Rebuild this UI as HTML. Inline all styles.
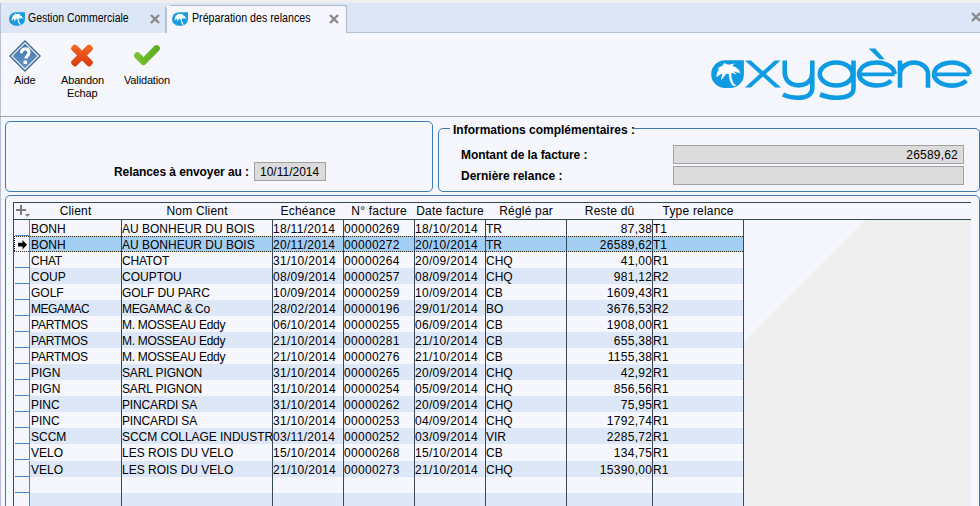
<!DOCTYPE html>
<html><head><meta charset="utf-8">
<style>
*{margin:0;padding:0;box-sizing:border-box}
html,body{width:980px;height:506px;overflow:hidden}
body{position:relative;background:#f5f6fe;font-family:"Liberation Sans",sans-serif;color:#000}
.a{position:absolute}
#topstrip{left:0;top:0;width:980px;height:3px;background:#efefef}
#tabbar{left:0;top:3px;width:980px;height:30px;background:#dde6f6}
#tabrest{left:346px;top:5px;width:634px;height:28px;border-left:1px solid #b4c0d4;border-bottom:1px solid #b4c0d4}
#leftedge{left:0;top:3px;width:1px;height:503px;background:#b9c1d2}
#tab2{left:165px;top:5px;width:182px;height:28px;background:#f5f6fe;border:1px solid #aebad0;border-left:2px solid #b6c0d3;border-bottom:none;border-radius:0 3px 0 0}
.tabt{font-size:12px;white-space:nowrap;transform-origin:0 0;transform:scaleX(0.872);line-height:14px}
.x{width:10px;height:10px}
.lbl{font-size:11px;white-space:nowrap;line-height:13px;letter-spacing:-0.15px}
.b{font-weight:bold;font-size:12px;white-space:nowrap;line-height:14px}
.sep{left:0;top:116px;width:980px;height:1px;background:#a3a3a3}
.panel{border:1px solid #3d7ab3;border-radius:5px}
.fld{background:#dcdcdc;border:1px solid #a2a2a2;font-size:12px;line-height:17px;white-space:nowrap}
.hd{font-size:12px;height:16px;line-height:16px;text-align:center;white-space:nowrap;overflow:hidden;letter-spacing:0.2px;text-indent:0.2px}
.cell{font-size:12px;height:16px;line-height:16px;white-space:nowrap;overflow:hidden;padding-left:0}
.cell.r{text-align:right;padding-left:0}
.n{letter-spacing:0.3px;padding-left:0}
.cell.r.n{margin-left:0.3px}
.dot{height:1px;background-image:linear-gradient(to right,#3a2a1a 50%,transparent 50%);background-size:2px 1px}
.vdot{width:1px;background-image:linear-gradient(to bottom,#000 50%,transparent 50%);background-size:1px 2px}
</style></head><body>
<div class="a" id="topstrip"></div>
<div class="a" id="tabbar"></div>
<div class="a" id="tabrest"></div>
<div class="a" id="tab2"></div>
<div class="a" id="leftedge"></div>
<div class="a" style="left:3px;top:5px;width:4px;height:1px;background:#f1eee4"></div>
<div class="a" style="left:3px;top:5px;width:1px;height:4px;background:#f1eee4"></div>
<div class="a" style="left:162px;top:5px;width:8px;height:1px;background:#f1eee4"></div>
<div class="a" style="left:166px;top:5px;width:1px;height:3px;background:#e8e6e0"></div>

<svg width="0" height="0" style="position:absolute">
 <defs>
  
  <linearGradient id="gq" x1="0" y1="0" x2="0" y2="1"><stop offset="0" stop-color="#4172aa"/><stop offset="1" stop-color="#6697cb"/></linearGradient>
  <linearGradient id="gx" gradientUnits="userSpaceOnUse" x1="0" y1="4" x2="0" y2="27" gradientTransform="rotate(-45 16 15.5)"><stop offset="0" stop-color="#f36a28"/><stop offset="0.5" stop-color="#e9501a"/><stop offset="1" stop-color="#d23a0e"/></linearGradient>
  <linearGradient id="gv" x1="0" y1="0" x2="1" y2="0"><stop offset="0" stop-color="#78c232"/><stop offset="0.4" stop-color="#6ab82a"/><stop offset="1" stop-color="#62ac22"/></linearGradient>
 </defs>
</svg>

<!-- tab 1 -->
<svg class="a" style="left:172px;top:12px" width="16" height="14" viewBox="0 0 33 28">
   <path d="M14,0 H33 V14 A14,14 0 0 1 19,28 H14 A14,14 0 0 1 0,14 A14,14 0 0 1 14,0Z" fill="#1a9be0"/>
   <path d="M13,2.7 L17.2,4.4 L23.3,3.3 L21.1,5.8 C23,6.3 26.5,8 28,10.2 L29.4,13.3 C28.5,12.6 27,12.3 26,12.2 L22.7,11 L25.2,14.2 L21.1,12.7 L20,13.5 C20,16 20.5,19 22.2,22.4 L24.9,25.4 L22.2,25.7 C20.5,24.5 19.8,23 19.4,21.8 C18.4,19.8 17.8,17.4 17.5,13.8 L15,13.5 L10,19.9 C10,17.5 10.4,16 11.1,14.6 L10,13.5 L5.3,16.9 C5.3,14.5 5.6,13 6.1,11.9 L7.8,9.1 L6.4,8.6 C7.3,7.5 8.3,6.8 9.4,6.3 L11.1,5.5 Z" fill="#fff"/>
  </svg>
<svg class="a" style="left:9px;top:12px" width="16" height="14" viewBox="0 0 33 28">
   <path d="M14,0 H33 V14 A14,14 0 0 1 19,28 H14 A14,14 0 0 1 0,14 A14,14 0 0 1 14,0Z" fill="#1a9be0"/>
   <path d="M13,2.7 L17.2,4.4 L23.3,3.3 L21.1,5.8 C23,6.3 26.5,8 28,10.2 L29.4,13.3 C28.5,12.6 27,12.3 26,12.2 L22.7,11 L25.2,14.2 L21.1,12.7 L20,13.5 C20,16 20.5,19 22.2,22.4 L24.9,25.4 L22.2,25.7 C20.5,24.5 19.8,23 19.4,21.8 C18.4,19.8 17.8,17.4 17.5,13.8 L15,13.5 L10,19.9 C10,17.5 10.4,16 11.1,14.6 L10,13.5 L5.3,16.9 C5.3,14.5 5.6,13 6.1,11.9 L7.8,9.1 L6.4,8.6 C7.3,7.5 8.3,6.8 9.4,6.3 L11.1,5.5 Z" fill="#fff"/>
  </svg>
<div class="a tabt" style="left:28px;top:11px">Gestion Commerciale</div>
<svg class="a x" style="left:150px;top:14px" viewBox="0 0 10 10"><path d="M1,1 L9,9 M9,1 L1,9" stroke="#888" stroke-width="2.3"/></svg>

<!-- tab 2 -->
<div class="a tabt" style="left:191.5px;top:11px;transform:scaleX(0.888)">Préparation des relances</div>
<svg class="a x" style="left:329px;top:14px" viewBox="0 0 10 10"><path d="M1,1 L9,9 M9,1 L1,9" stroke="#888" stroke-width="2.3"/></svg>
<svg class="a x" style="left:971px;top:12px" viewBox="0 0 10 10"><path d="M1,1 L9,9 M9,1 L1,9" stroke="#888" stroke-width="2.3"/></svg>

<!-- toolbar -->
<svg class="a" style="left:9px;top:40px" width="32" height="32" viewBox="0 0 32 32">
 <path d="M16,1 L31,16 L16,31 L1,16Z" fill="#fff" stroke="#456f9c" stroke-width="1.6" stroke-linejoin="round"/>
 <path d="M16,3.9 L28.1,16 L16,28.1 L3.9,16Z" fill="url(#gq)" stroke="#4a78aa" stroke-width="0.6" stroke-linejoin="round"/>
 <path d="M12.4,13.2 C12.4,10.6 14,8.9 16.1,8.9 C18.4,8.9 20,10.4 20,12.6 C20,15.6 17,15.6 17,18.6" stroke="#fff" stroke-width="3.1" fill="none"/>
 <rect x="14.5" y="20.5" width="3.5" height="3.5" rx="0.8" fill="#fff"/>
</svg>
<svg class="a" style="left:66px;top:40px" width="32" height="32" viewBox="0 0 32 32">
 <g transform="rotate(45 16 15.5)"><rect x="2.6" y="12" width="26.8" height="7" rx="2.4" fill="url(#gx)"/><rect x="12.5" y="2.1" width="7" height="26.8" rx="2.4" fill="url(#gx)"/></g>
</svg>
<svg class="a" style="left:130px;top:40px" width="34" height="30" viewBox="0 0 34 30">
 <path d="M7.4,15.6 L13.4,21.8 L26.6,8.4" stroke="url(#gv)" stroke-width="6.6" stroke-linecap="round" stroke-linejoin="round" fill="none"/>
</svg>
<div class="a lbl" style="left:14px;top:74px">Aide</div>
<div class="a lbl" style="left:61px;top:74px">Abandon</div>
<div class="a lbl" style="left:67px;top:87px">Echap</div>
<div class="a lbl" style="left:124px;top:74px">Validation</div>

<!-- logo -->
<svg class="a" style="left:700px;top:40px" width="280" height="70" viewBox="700 40 280 70">
 <path d="M725.2,60.3 H743.9 V74.3 A14,13.7 0 0 1 729.9,88 H725.2 A14,13.85 0 0 1 711.2,74.15 A14,13.85 0 0 1 725.2,60.3Z" fill="#0f9be3"/>
 <g transform="translate(711.2,60.3)" fill="#fff">
  <path d="M13,2.7 L17.2,4.4 L23.3,3.3 L21.1,5.8 C23,6.3 26.5,8 28,10.2 L29.4,13.3 C28.5,12.6 27,12.3 26,12.2 L22.7,11 L25.2,14.2 L21.1,12.7 L20,13.5 C20,16 20.5,19 22.2,22.4 L24.9,25.4 L22.2,25.7 C20.5,24.5 19.8,23 19.4,21.8 C18.4,19.8 17.8,17.4 17.5,13.8 L15,13.5 L10,19.9 C10,17.5 10.4,16 11.1,14.6 L10,13.5 L5.3,16.9 C5.3,14.5 5.6,13 6.1,11.9 L7.8,9.1 L6.4,8.6 C7.3,7.5 8.3,6.8 9.4,6.3 L11.1,5.5 Z"/>
 </g>
 <path d="M744.9,60.4 H750.9 L781,87.6 H775Z M774.6,60.4 H780.5 L750.9,87.6 H744.9Z" fill="#0f9be3"/>
 <g fill="none" stroke="#0f9be3" stroke-width="4.6">
  <path d="M784.7,60.4 V72 C784.7,80 790,85.4 798.5,85.4 C807,85.4 812.3,80 812.3,72 V60.4 M812.3,72 V88 C812.3,95 806,97.7 798,97.7 C792,97.7 787,96.5 783,94.5"/>
  <ellipse cx="836.2" cy="74.05" rx="16.4" ry="11.5"/>
  <path d="M853.5,60.4 V88 C853.5,95 847,97.7 837,97.7 C830,97.7 825,96.5 820,94.5"/>
  <path d="M859,74.4 H894.5" stroke-width="3.6"/><path d="M894.5,74.05 A17.7,11.5 0 1 0 891.25,80.65"/>
  <path d="M900,60.4 V87.7 M900,74 A14,11.45 0 0 1 928,74 V87.7"/>
  <path d="M934,74.4 H969.5" stroke-width="3.6"/><path d="M969.5,74.05 A17.7,11.5 0 1 0 966.35,80.65"/>
 </g>
 <path d="M868.7,48.6 H875.2 L884.7,59.2 H879.4Z" fill="#0f9be3"/>
</svg>

<div class="a sep"></div>

<!-- panels -->
<div class="a panel" style="left:5px;top:121px;width:428px;height:71px"></div>
<div class="a panel" style="left:438px;top:128px;width:542px;height:64px"></div>
<div class="a panel" style="left:5px;top:195px;width:975px;height:320px"></div>
<div class="a" style="left:450px;top:126px;width:184px;height:5px;background:#f5f6fe"></div>
<div class="a b" style="left:453px;top:123px">Informations complémentaires :</div>
<div class="a b" style="left:461px;top:148px;letter-spacing:-0.07px">Montant de la facture :</div>
<div class="a b" style="left:461px;top:169px">Dernière relance :</div>
<div class="a fld" style="left:673px;top:145px;width:291px;height:19px;text-align:right;padding-right:5px;padding-top:1px;letter-spacing:0.2px">26589,62</div>
<div class="a fld" style="left:673px;top:166px;width:291px;height:19px"></div>

<div class="a b" style="left:114px;top:165px;letter-spacing:-0.08px">Relances à envoyer au :</div>
<div class="a fld" style="left:254px;top:162px;width:72px;height:19px;padding-left:5px;padding-top:1px">10/11/2014</div>

<!-- grid plus icon -->
<svg class="a" style="left:15px;top:204px" width="16" height="14" viewBox="0 0 16 14"><path d="M1,6 H11 M6,1 V11" stroke="#7b7b7b" stroke-width="2"/><path d="M10,10 H15 L12.5,13Z" fill="#7b7b7b"/></svg>

<div class="a" style="left:13px;top:202px;width:958px;height:1px;background:#34495c"></div>
<div class="a" style="left:13px;top:219px;width:958px;height:1px;background:#34495c"></div>
<div class="a" style="left:13px;top:202px;width:1px;height:304px;background:#34495c"></div>
<div class="a hd" style="left:30px;width:91px;top:203px">Client</div>
<div class="a hd" style="left:122px;width:150px;top:203px">Nom Client</div>
<div class="a hd" style="left:273px;width:70px;top:203px">Echéance</div>
<div class="a hd" style="left:344px;width:70px;top:203px">N° facture</div>
<div class="a hd" style="left:415px;width:70px;top:203px">Date facture</div>
<div class="a hd" style="left:486px;width:80px;top:203px">Réglé par</div>
<div class="a hd" style="left:567px;width:85px;top:203px">Reste dû</div>
<div class="a hd" style="left:653px;width:90px;top:203px">Type relance</div>
<div class="a" style="left:744px;top:220px;width:227px;height:286px;background:#eeeeee;clip-path:polygon(121.5px 0,100% 0,100% 100%,0 100%,0 121.5px)"></div>
<div class="a" style="left:30px;top:220px;width:713px;height:16px;background:#f5f6fe"></div>
<div class="a" style="left:15px;top:235px;width:14px;height:1px;background:#4a87c0"></div>
<div class="a cell" style="left:30px;width:91px;top:221px;padding-left:1px">BONH</div>
<div class="a cell" style="left:122px;width:150px;top:221px">AU BONHEUR DU BOIS</div>
<div class="a cell n" style="left:273px;width:70px;top:221px">18/11/2014</div>
<div class="a cell n" style="left:344px;width:70px;top:221px">00000269</div>
<div class="a cell n" style="left:415px;width:70px;top:221px">18/10/2014</div>
<div class="a cell" style="left:486px;width:80px;top:221px">TR</div>
<div class="a cell r n" style="left:567px;width:85px;top:221px">87,38</div>
<div class="a cell" style="left:653px;width:90px;top:221px">T1</div>
<div class="a" style="left:30px;top:236px;width:713px;height:16px;background:#a4cdf4"></div>
<div class="a dot" style="left:14px;top:236px;width:729px"></div>
<div class="a dot" style="left:14px;top:251px;width:729px"></div>
<div class="a vdot" style="left:14px;top:236px;height:16px"></div>
<div class="a cell" style="left:30px;width:91px;top:237px;padding-left:1px">BONH</div>
<div class="a cell" style="left:122px;width:150px;top:237px">AU BONHEUR DU BOIS</div>
<div class="a cell n" style="left:273px;width:70px;top:237px">20/11/2014</div>
<div class="a cell n" style="left:344px;width:70px;top:237px">00000272</div>
<div class="a cell n" style="left:415px;width:70px;top:237px">20/10/2014</div>
<div class="a cell" style="left:486px;width:80px;top:237px">TR</div>
<div class="a cell r n" style="left:567px;width:85px;top:237px">26589,62</div>
<div class="a cell" style="left:653px;width:90px;top:237px">T1</div>
<div class="a" style="left:30px;top:252px;width:713px;height:16px;background:#f5f6fe"></div>
<div class="a" style="left:15px;top:267px;width:14px;height:1px;background:#4a87c0"></div>
<div class="a cell" style="left:30px;width:91px;top:253px;padding-left:1px;letter-spacing:-0.2px">CHAT</div>
<div class="a cell" style="left:122px;width:150px;top:253px;letter-spacing:-0.2px">CHATOT</div>
<div class="a cell n" style="left:273px;width:70px;top:253px">31/10/2014</div>
<div class="a cell n" style="left:344px;width:70px;top:253px">00000264</div>
<div class="a cell n" style="left:415px;width:70px;top:253px">20/09/2014</div>
<div class="a cell" style="left:486px;width:80px;top:253px">CHQ</div>
<div class="a cell r n" style="left:567px;width:85px;top:253px">41,00</div>
<div class="a cell" style="left:653px;width:90px;top:253px">R1</div>
<div class="a" style="left:30px;top:268px;width:713px;height:16px;background:#dde7f7"></div>
<div class="a" style="left:15px;top:283px;width:14px;height:1px;background:#4a87c0"></div>
<div class="a cell" style="left:30px;width:91px;top:269px;padding-left:1px">COUP</div>
<div class="a cell" style="left:122px;width:150px;top:269px">COUPTOU</div>
<div class="a cell n" style="left:273px;width:70px;top:269px">08/09/2014</div>
<div class="a cell n" style="left:344px;width:70px;top:269px">00000257</div>
<div class="a cell n" style="left:415px;width:70px;top:269px">08/09/2014</div>
<div class="a cell" style="left:486px;width:80px;top:269px">CHQ</div>
<div class="a cell r n" style="left:567px;width:85px;top:269px">981,12</div>
<div class="a cell" style="left:653px;width:90px;top:269px">R2</div>
<div class="a" style="left:30px;top:284px;width:713px;height:16px;background:#f5f6fe"></div>
<div class="a" style="left:15px;top:299px;width:14px;height:1px;background:#4a87c0"></div>
<div class="a cell" style="left:30px;width:91px;top:285px;padding-left:1px">GOLF</div>
<div class="a cell" style="left:122px;width:150px;top:285px;letter-spacing:-0.12px">GOLF DU PARC</div>
<div class="a cell n" style="left:273px;width:70px;top:285px">10/09/2014</div>
<div class="a cell n" style="left:344px;width:70px;top:285px">00000259</div>
<div class="a cell n" style="left:415px;width:70px;top:285px">10/09/2014</div>
<div class="a cell" style="left:486px;width:80px;top:285px">CB</div>
<div class="a cell r n" style="left:567px;width:85px;top:285px">1609,43</div>
<div class="a cell" style="left:653px;width:90px;top:285px">R1</div>
<div class="a" style="left:30px;top:300px;width:713px;height:16px;background:#dde7f7"></div>
<div class="a" style="left:15px;top:315px;width:14px;height:1px;background:#4a87c0"></div>
<div class="a cell" style="left:30px;width:91px;top:301px;padding-left:1px;letter-spacing:-0.55px">MEGAMAC</div>
<div class="a cell" style="left:122px;width:150px;top:301px;letter-spacing:-0.36px">MEGAMAC &amp; Co</div>
<div class="a cell n" style="left:273px;width:70px;top:301px">28/02/2014</div>
<div class="a cell n" style="left:344px;width:70px;top:301px">00000196</div>
<div class="a cell n" style="left:415px;width:70px;top:301px">29/01/2014</div>
<div class="a cell" style="left:486px;width:80px;top:301px">BO</div>
<div class="a cell r n" style="left:567px;width:85px;top:301px">3676,53</div>
<div class="a cell" style="left:653px;width:90px;top:301px">R2</div>
<div class="a" style="left:30px;top:316px;width:713px;height:16px;background:#f5f6fe"></div>
<div class="a" style="left:15px;top:331px;width:14px;height:1px;background:#4a87c0"></div>
<div class="a cell" style="left:30px;width:91px;top:317px;padding-left:1px;letter-spacing:-0.2px">PARTMOS</div>
<div class="a cell" style="left:122px;width:150px;top:317px;letter-spacing:-0.28px">M. MOSSEAU Eddy</div>
<div class="a cell n" style="left:273px;width:70px;top:317px">06/10/2014</div>
<div class="a cell n" style="left:344px;width:70px;top:317px">00000255</div>
<div class="a cell n" style="left:415px;width:70px;top:317px">06/09/2014</div>
<div class="a cell" style="left:486px;width:80px;top:317px">CB</div>
<div class="a cell r n" style="left:567px;width:85px;top:317px">1908,00</div>
<div class="a cell" style="left:653px;width:90px;top:317px">R1</div>
<div class="a" style="left:30px;top:332px;width:713px;height:16px;background:#dde7f7"></div>
<div class="a" style="left:15px;top:347px;width:14px;height:1px;background:#4a87c0"></div>
<div class="a cell" style="left:30px;width:91px;top:333px;padding-left:1px;letter-spacing:-0.2px">PARTMOS</div>
<div class="a cell" style="left:122px;width:150px;top:333px;letter-spacing:-0.28px">M. MOSSEAU Eddy</div>
<div class="a cell n" style="left:273px;width:70px;top:333px">21/10/2014</div>
<div class="a cell n" style="left:344px;width:70px;top:333px">00000281</div>
<div class="a cell n" style="left:415px;width:70px;top:333px">21/10/2014</div>
<div class="a cell" style="left:486px;width:80px;top:333px">CB</div>
<div class="a cell r n" style="left:567px;width:85px;top:333px">655,38</div>
<div class="a cell" style="left:653px;width:90px;top:333px">R1</div>
<div class="a" style="left:30px;top:348px;width:713px;height:16px;background:#f5f6fe"></div>
<div class="a" style="left:15px;top:363px;width:14px;height:1px;background:#4a87c0"></div>
<div class="a cell" style="left:30px;width:91px;top:349px;padding-left:1px;letter-spacing:-0.2px">PARTMOS</div>
<div class="a cell" style="left:122px;width:150px;top:349px;letter-spacing:-0.28px">M. MOSSEAU Eddy</div>
<div class="a cell n" style="left:273px;width:70px;top:349px">21/10/2014</div>
<div class="a cell n" style="left:344px;width:70px;top:349px">00000276</div>
<div class="a cell n" style="left:415px;width:70px;top:349px">21/10/2014</div>
<div class="a cell" style="left:486px;width:80px;top:349px">CB</div>
<div class="a cell r n" style="left:567px;width:85px;top:349px">1155,38</div>
<div class="a cell" style="left:653px;width:90px;top:349px">R1</div>
<div class="a" style="left:30px;top:364px;width:713px;height:16px;background:#dde7f7"></div>
<div class="a" style="left:15px;top:379px;width:14px;height:1px;background:#4a87c0"></div>
<div class="a cell" style="left:30px;width:91px;top:365px;padding-left:1px">PIGN</div>
<div class="a cell" style="left:122px;width:150px;top:365px;letter-spacing:-0.13px">SARL PIGNON</div>
<div class="a cell n" style="left:273px;width:70px;top:365px">31/10/2014</div>
<div class="a cell n" style="left:344px;width:70px;top:365px">00000265</div>
<div class="a cell n" style="left:415px;width:70px;top:365px">20/09/2014</div>
<div class="a cell" style="left:486px;width:80px;top:365px">CHQ</div>
<div class="a cell r n" style="left:567px;width:85px;top:365px">42,92</div>
<div class="a cell" style="left:653px;width:90px;top:365px">R1</div>
<div class="a" style="left:30px;top:380px;width:713px;height:16px;background:#f5f6fe"></div>
<div class="a" style="left:15px;top:395px;width:14px;height:1px;background:#4a87c0"></div>
<div class="a cell" style="left:30px;width:91px;top:381px;padding-left:1px">PIGN</div>
<div class="a cell" style="left:122px;width:150px;top:381px;letter-spacing:-0.13px">SARL PIGNON</div>
<div class="a cell n" style="left:273px;width:70px;top:381px">31/10/2014</div>
<div class="a cell n" style="left:344px;width:70px;top:381px">00000254</div>
<div class="a cell n" style="left:415px;width:70px;top:381px">05/09/2014</div>
<div class="a cell" style="left:486px;width:80px;top:381px">CHQ</div>
<div class="a cell r n" style="left:567px;width:85px;top:381px">856,56</div>
<div class="a cell" style="left:653px;width:90px;top:381px">R1</div>
<div class="a" style="left:30px;top:396px;width:713px;height:16px;background:#dde7f7"></div>
<div class="a" style="left:15px;top:411px;width:14px;height:1px;background:#4a87c0"></div>
<div class="a cell" style="left:30px;width:91px;top:397px;padding-left:1px">PINC</div>
<div class="a cell" style="left:122px;width:150px;top:397px;letter-spacing:-0.15px">PINCARDI SA</div>
<div class="a cell n" style="left:273px;width:70px;top:397px">31/10/2014</div>
<div class="a cell n" style="left:344px;width:70px;top:397px">00000262</div>
<div class="a cell n" style="left:415px;width:70px;top:397px">20/09/2014</div>
<div class="a cell" style="left:486px;width:80px;top:397px">CHQ</div>
<div class="a cell r n" style="left:567px;width:85px;top:397px">75,95</div>
<div class="a cell" style="left:653px;width:90px;top:397px">R1</div>
<div class="a" style="left:30px;top:412px;width:713px;height:16px;background:#f5f6fe"></div>
<div class="a" style="left:15px;top:427px;width:14px;height:1px;background:#4a87c0"></div>
<div class="a cell" style="left:30px;width:91px;top:413px;padding-left:1px">PINC</div>
<div class="a cell" style="left:122px;width:150px;top:413px;letter-spacing:-0.15px">PINCARDI SA</div>
<div class="a cell n" style="left:273px;width:70px;top:413px">31/10/2014</div>
<div class="a cell n" style="left:344px;width:70px;top:413px">00000253</div>
<div class="a cell n" style="left:415px;width:70px;top:413px">04/09/2014</div>
<div class="a cell" style="left:486px;width:80px;top:413px">CHQ</div>
<div class="a cell r n" style="left:567px;width:85px;top:413px">1792,74</div>
<div class="a cell" style="left:653px;width:90px;top:413px">R1</div>
<div class="a" style="left:30px;top:428px;width:713px;height:16px;background:#dde7f7"></div>
<div class="a" style="left:15px;top:443px;width:14px;height:1px;background:#4a87c0"></div>
<div class="a cell" style="left:30px;width:91px;top:429px;padding-left:1px">SCCM</div>
<div class="a cell" style="left:122px;width:150px;top:429px;letter-spacing:-0.05px">SCCM COLLAGE INDUSTRIE</div>
<div class="a cell n" style="left:273px;width:70px;top:429px">03/11/2014</div>
<div class="a cell n" style="left:344px;width:70px;top:429px">00000252</div>
<div class="a cell n" style="left:415px;width:70px;top:429px">03/09/2014</div>
<div class="a cell" style="left:486px;width:80px;top:429px">VIR</div>
<div class="a cell r n" style="left:567px;width:85px;top:429px">2285,72</div>
<div class="a cell" style="left:653px;width:90px;top:429px">R1</div>
<div class="a" style="left:30px;top:444px;width:713px;height:17px;background:#f5f6fe"></div>
<div class="a" style="left:15px;top:459px;width:14px;height:1px;background:#4a87c0"></div>
<div class="a cell" style="left:30px;width:91px;top:445px;padding-left:1px">VELO</div>
<div class="a cell" style="left:122px;width:150px;top:445px">LES ROIS DU VELO</div>
<div class="a cell n" style="left:273px;width:70px;top:445px">15/10/2014</div>
<div class="a cell n" style="left:344px;width:70px;top:445px">00000268</div>
<div class="a cell n" style="left:415px;width:70px;top:445px">15/10/2014</div>
<div class="a cell" style="left:486px;width:80px;top:445px">CB</div>
<div class="a cell r n" style="left:567px;width:85px;top:445px">134,75</div>
<div class="a cell" style="left:653px;width:90px;top:445px">R1</div>
<div class="a" style="left:30px;top:461px;width:713px;height:16px;background:#dde7f7"></div>
<div class="a" style="left:15px;top:476px;width:14px;height:1px;background:#4a87c0"></div>
<div class="a cell" style="left:30px;width:91px;top:462px;padding-left:1px">VELO</div>
<div class="a cell" style="left:122px;width:150px;top:462px">LES ROIS DU VELO</div>
<div class="a cell n" style="left:273px;width:70px;top:462px">21/10/2014</div>
<div class="a cell n" style="left:344px;width:70px;top:462px">00000273</div>
<div class="a cell n" style="left:415px;width:70px;top:462px">21/10/2014</div>
<div class="a cell" style="left:486px;width:80px;top:462px">CHQ</div>
<div class="a cell r n" style="left:567px;width:85px;top:462px">15390,00</div>
<div class="a cell" style="left:653px;width:90px;top:462px">R1</div>
<div class="a" style="left:30px;top:477px;width:713px;height:16px;background:#f5f6fe"></div>
<div class="a" style="left:15px;top:492px;width:14px;height:1px;background:#4a87c0"></div>
<div class="a" style="left:30px;top:493px;width:713px;height:16px;background:#dde7f7"></div>
<div class="a" style="left:15px;top:508px;width:14px;height:1px;background:#4a87c0"></div>
<div class="a" style="left:29px;top:220px;width:1px;height:240px;background:#4a87c0"></div>
<div class="a" style="left:29px;top:461px;width:1px;height:45px;background:#4a87c0"></div>
<div class="a" style="left:121px;top:220px;width:1px;height:286px;background:#34495c"></div>
<div class="a" style="left:272px;top:220px;width:1px;height:286px;background:#34495c"></div>
<div class="a" style="left:343px;top:220px;width:1px;height:286px;background:#34495c"></div>
<div class="a" style="left:414px;top:220px;width:1px;height:286px;background:#34495c"></div>
<div class="a" style="left:485px;top:220px;width:1px;height:286px;background:#34495c"></div>
<div class="a" style="left:566px;top:220px;width:1px;height:286px;background:#34495c"></div>
<div class="a" style="left:652px;top:220px;width:1px;height:286px;background:#34495c"></div>
<div class="a" style="left:743px;top:220px;width:1px;height:286px;background:#34495c"></div>
<svg class="a" style="left:18px;top:240px" width="9" height="10" viewBox="0 0 9 10"><path d="M0,2.8 H4.5 V0 L9,4.7 L4.5,9.4 V6.6 H0Z" fill="#000"/></svg>
</body></html>
